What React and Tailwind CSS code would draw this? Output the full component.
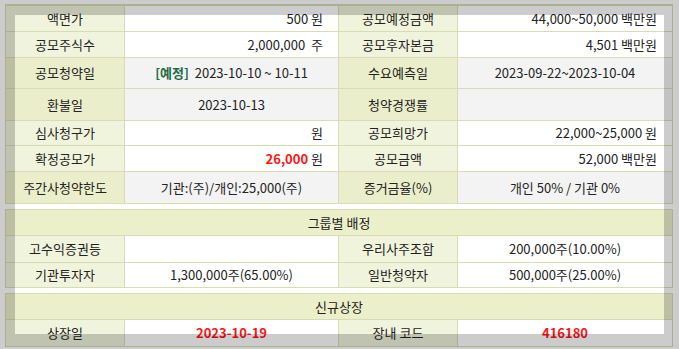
const rows = [
  { h: 'h-[26px]', l1: '액면가', v1: <>500 원</>, l2: '공모예정금액', v2: <>44,000~50,000 백만원</>, right: true },
  { h: 'h-[26px]', l1: '공모주식수', v1: <>2,000,000&nbsp;&nbsp;주</>, l2: '공모후자본금', v2: <>4,501 백만원</>, right: true },
  {
    h: 'h-[31px]',
    l1: '공모청약일',
    v1: (
      <>
        <b className="font-bold text-[#1d6b45]">[예정]</b>&nbsp;&nbsp;2023-10-10 ~ 10-11
      </>
    ),
    l2: '수요예측일',
    v2: <>2023-09-22~2023-10-04</>,
  },
  { h: 'h-[32px]', l1: '환불일', v1: <>2023-10-13</>, l2: '청약경쟁률', v2: null },
  { h: 'h-[25px]', l1: '심사청구가', v1: <>원</>, l2: '공모희망가', v2: <>22,000~25,000 원</>, right: true },
  {
    h: 'h-[26px]',
    l1: '확정공모가',
    v1: (
      <>
        <b className="font-bold text-[#ff1414]">26,000</b> 원
      </>
    ),
    l2: '공모금액',
    v2: <>52,000 백만원</>,
    right: true,
  },
  { h: 'h-[31px]', l1: '주간사청약한도', v1: <>기관:(주)/개인:25,000(주)</>, l2: '증거금율(%)', v2: <>개인 50% / 기관 0%</> },
]

const Row = ({ h, l1, v1, l2, v2, right, last }) => {
  const labelBg = right ? 'bg-[#f1f4dc]' : 'bg-[#eaeecb]'
  const valueCls = right
    ? 'justify-end pr-[15px] bg-white'
    : 'justify-center bg-[#f3f3f3]'
  return (
    <div className={`flex ${h} ${last ? '' : 'border-b border-[#d8dcb4]'}`}>
      <div className={`flex w-[119px] items-center justify-center border-r border-[#d8dcb4] ${labelBg}`}>{l1}</div>
      <div className={`flex w-[214px] items-center border-r border-[#d8dcb4] ${valueCls}`}>
        <span>{v1}</span>
      </div>
      <div className={`flex w-[119px] items-center justify-center border-r border-[#d8dcb4] ${labelBg}`}>{l2}</div>
      <div className={`flex flex-1 items-center ${valueCls}`}>
        <span>{v2}</span>
      </div>
    </div>
  )
}

const Header = ({ children }) => (
  <div className="flex h-[26px] items-center justify-center border-b border-[#d8dcb4] bg-[#ebefca]">{children}</div>
)

const SimpleRow = ({ h, cells, last }) => (
  <div className={`flex ${h} ${last ? '' : 'border-b border-[#d8dcb4]'}`}>
    <div className="flex w-[119px] items-center justify-center border-r border-[#d8dcb4] bg-[#f1f4dc]">{cells[0]}</div>
    <div className="flex w-[214px] items-center justify-center border-r border-[#d8dcb4] bg-white">{cells[1]}</div>
    <div className="flex w-[119px] items-center justify-center border-r border-[#d8dcb4] bg-[#f1f4dc]">{cells[2]}</div>
    <div className="flex flex-1 items-center justify-center bg-white">{cells[3]}</div>
  </div>
)

export default function App() {
  return (
    <div
      className="relative h-[349px] w-[679px] overflow-hidden bg-white pl-[5px] pt-[4px] text-[13px] text-[#222]"
      style={{ fontFamily: '"Noto Sans CJK KR", "Noto Sans", sans-serif' }}
    >
      <div className="w-[668px] border border-t-2 border-[#d8dcb4]">
        {rows.map((r, i) => (
          <Row key={r.l1} {...r} last={i === rows.length - 1} />
        ))}
      </div>

      <div className="mt-[5px] w-[668px] border border-[#d8dcb4]">
        <Header>그룹별 배정</Header>
        <SimpleRow h="h-[27px]" cells={['고수익증권등', '', '우리사주조합', '200,000주(10.00%)']} />
        <SimpleRow h="h-[24px]" cells={['기관투자자', '1,300,000주(65.00%)', '일반청약자', '500,000주(25.00%)']} last />
      </div>

      <div className="mt-[5px] w-[668px] border border-[#d8dcb4]">
        <Header>신규상장</Header>
        <SimpleRow
          h="h-[26px]"
          cells={[
            '상장일',
            <b key="d" className="font-bold text-[#ff1414]">2023-10-19</b>,
            '장내 코드',
            <b key="c" className="font-bold text-[#ff1414]">416180</b>,
          ]}
          last
        />
      </div>

      <div className="pointer-events-none absolute left-[15px] top-[15px] h-[319px] w-[649px] shadow-[0_0_0_9999px_rgba(0,0,0,0.2)]" />
    </div>
  )
}
